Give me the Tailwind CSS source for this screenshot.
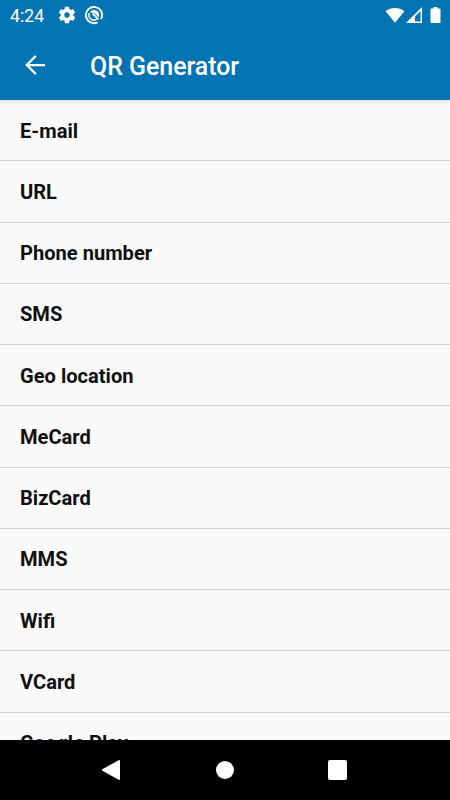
<!DOCTYPE html>
<html lang="en">
<head>
<meta charset="utf-8">
<title>QR Generator</title>
<script src="https://cdn.jsdelivr.net/npm/@tailwindcss/browser@4"></script>
</head>
<body class="font-[Roboto,sans-serif]">
<div class="flex h-[800px] w-[450px] flex-col overflow-hidden bg-[#fafafa]">
  <header class="z-10 flex h-[100px] shrink-0 flex-col bg-[#0274b3] text-white shadow-[0_1px_4px_rgba(0,0,0,0.15)]">
    <div class="flex h-[30px] items-center pl-[10px] pr-[9px]">
      <span class="w-[47px] pt-px text-[17.7px] leading-[30px]">4:24</span>
      <svg class="size-5" viewBox="0 0 24 24" fill="currentColor"><path d="M19.43 12.98c.04-.32.07-.64.07-.98s-.03-.66-.07-.98l2.11-1.65c.19-.15.24-.42.12-.64l-2-3.46c-.12-.22-.39-.3-.61-.22l-2.49 1c-.52-.4-1.08-.73-1.69-.98l-.38-2.65A.49.49 0 0 0 14 2h-4c-.25 0-.46.18-.49.42l-.38 2.65c-.61.25-1.17.59-1.69.98l-2.49-1c-.23-.09-.49 0-.61.22l-2 3.46c-.13.22-.07.49.12.64l2.11 1.65c-.04.32-.07.65-.07.98s.03.66.07.98l-2.11 1.65c-.19.15-.24.42-.12.64l2 3.46c.12.22.39.3.61.22l2.49-1c.52.4 1.08.73 1.69.98l.38 2.65c.03.24.24.42.49.42h4c.25 0 .46-.18.49-.42l.38-2.65c.61-.25 1.17-.59 1.69-.98l2.49 1c.23.09.49 0 .61-.22l2-3.46c.12-.22.07-.49-.12-.64zM12 15.2a3.2 3.2 0 1 1 0-6.4 3.2 3.2 0 0 1 0 6.4z"/></svg>
      <svg class="ml-[7px] size-5" viewBox="0 0 20 20" fill="none" stroke="currentColor"><path d="M13.6 17.3A8.1 8.1 0 1 1 17 14.1" stroke-width="1.9"/><path d="M12.6 14.3A5 5 0 0 1 5.4 8" stroke-width="1.4"/><path d="M5.8 7.2C8 4.2 12.8 4.3 14.7 8 15.4 9.6 15.2 11.2 14.6 12.3L10.6 8.2Z" fill="currentColor" stroke="none"/><path d="M8.6 8.6 14.4 14.4" stroke-width="2"/></svg>
      <div class="ml-auto flex items-center">
        <svg class="h-[18px] w-5" viewBox="0 0 20 18" fill="currentColor"><path d="M.6 5.2C5.8 .8 14.2 .8 19.4 5.2L10 16.7Z"/></svg>
        <svg class="ml-[1px] h-[18px] w-[17px]" viewBox="0 0 17 18"><path d="M0 17 16 1V17Z" fill="white"/><path d="M9 10.6 14.5 5V15.6H9Z" fill="#0274b3"/></svg>
        <svg class="ml-[7px] h-[18px] w-[11px]" viewBox="0 0 11 18" fill="currentColor"><path d="M3.5 1H7.5V2.6H9.6Q10.5 2.6 10.5 3.5V16.1Q10.5 17 9.6 17H1.4Q.5 17 .5 16.1V3.5Q.5 2.6 1.4 2.6H3.5Z"/></svg>
      </div>
    </div>
    <div class="flex h-[70px] items-center pl-[20px]">
      <svg class="size-[30px]" viewBox="0 0 24 24" fill="none" stroke="currentColor" stroke-width="1.8"><path d="M20 12H5.4M12.7 4.7 5.4 12l7.3 7.3"/></svg>
      <h1 class="ml-[40px] pt-[3px] text-[24.9px] font-medium leading-[30px]">QR Generator</h1>
    </div>
  </header>
  <ul class="min-h-0 flex-1 overflow-hidden text-[20.1px] font-bold text-[#101010]">
    <li class="flex h-[61.25px] items-center border-b border-[#d6d6d6] px-5 pt-px">E-mail</li>
    <li class="flex h-[61.25px] items-center border-b border-[#d6d6d6] px-5 pt-px">URL</li>
    <li class="flex h-[61.25px] items-center border-b border-[#d6d6d6] px-5 pt-px">Phone number</li>
    <li class="flex h-[61.25px] items-center border-b border-[#d6d6d6] px-5 pt-px">SMS</li>
    <li class="flex h-[61.25px] items-center border-b border-[#d6d6d6] px-5 pt-px">Geo location</li>
    <li class="flex h-[61.25px] items-center border-b border-[#d6d6d6] px-5 pt-px">MeCard</li>
    <li class="flex h-[61.25px] items-center border-b border-[#d6d6d6] px-5 pt-px">BizCard</li>
    <li class="flex h-[61.25px] items-center border-b border-[#d6d6d6] px-5 pt-px">MMS</li>
    <li class="flex h-[61.25px] items-center border-b border-[#d6d6d6] px-5 pt-px">Wifi</li>
    <li class="flex h-[61.25px] items-center border-b border-[#d6d6d6] px-5 pt-px">VCard</li>
    <li class="flex h-[61.25px] items-center border-b border-[#d6d6d6] px-5 pt-px">Google Play</li>
  </ul>
  <nav class="flex h-[60px] shrink-0 items-center bg-black pl-[101px] text-white">
    <svg class="h-5 w-[20px]" viewBox="0 0 20 20" fill="currentColor"><path d="M1.4 9.3 17.6.2Q19 -.3 19 1V19Q19 20.3 17.6 19.8L1.4 10.7Q.4 10 1.4 9.3Z"/></svg>
    <span class="ml-[95px] size-[18px] rounded-full bg-white"></span>
    <span class="ml-[94px] h-5 w-[19px] rounded-[2px] bg-white"></span>
  </nav>
</div>
</body>
</html>
